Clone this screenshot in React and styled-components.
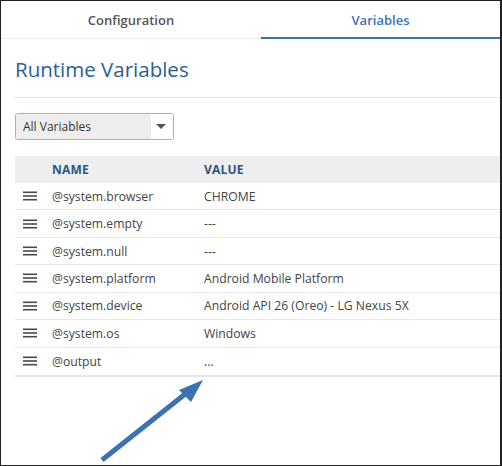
import React from "react";
import styled, { createGlobalStyle } from "styled-components";

const GlobalStyle = createGlobalStyle`
    html, body {
        margin: 0;
        padding: 0;
        background: #fff;
    }
    body {
        font-family: "Open Sans", "Noto Sans", sans-serif;
    }
`;

const variables = [
    { name: "@system.browser", value: "CHROME" },
    { name: "@system.empty", value: "---" },
    { name: "@system.null", value: "---" },
    { name: "@system.platform", value: "Android Mobile Platform" },
    { name: "@system.device", value: "Android API 26 (Oreo) - LG Nexus 5X" },
    { name: "@system.os", value: "Windows" },
    { name: "@output", value: "..." },
];

const Frame = styled.div`
    position: relative;
    width: 502px;
    height: 466px;
    box-sizing: border-box;
    border: 1px solid #222;
    border-right-width: 2px;
    overflow: hidden;
    background: #fff;
`;

const Tabs = styled.div`
    display: flex;
    height: 38px;
    box-sizing: border-box;
    border-bottom: 1px solid #ebebeb;
`;

const Tab = styled.div`
    flex: ${({ $grow }) => ($grow ? "1" : "0 0 260px")};
    display: flex;
    align-items: center;
    justify-content: center;
    font-size: 13px;
    font-weight: 600;
    color: ${({ $active }) => ($active ? "#3a72b2" : "#555")};
    border-bottom: 2px solid ${({ $active }) => ($active ? "#3a72b2" : "transparent")};
    margin-bottom: -1px;
    padding-top: 1px;
`;

const Content = styled.div`
    padding-left: 13px;
`;

const Title = styled.h1`
    margin: 0;
    padding-top: 16px;
    padding-bottom: 14px;
    padding-left: 1px;
    font-size: 20.5px;
    line-height: 28px;
    font-weight: 400;
    color: #2b5f8f;
    border-bottom: 1px solid #e6e6e6;
`;

const Select = styled.div`
    margin: 15px 0 0 1px;
    width: 159px;
    height: 27px;
    box-sizing: border-box;
    display: flex;
    border: 1px solid #a9b0b7;
    border-radius: 3px;
    overflow: hidden;
    font-size: 12px;
    color: #333;
`;

const SelectLabel = styled.div`
    flex: 1;
    display: flex;
    align-items: center;
    padding-left: 7px;
    background: #eeeeee;
`;

const SelectButton = styled.div`
    width: 22px;
    display: flex;
    align-items: center;
    justify-content: center;
    background: #fff;
`;

const Caret = styled.span`
    width: 0;
    height: 0;
    border-left: 5px solid transparent;
    border-right: 5px solid transparent;
    border-top: 5px solid #555;
    margin-right: 2px;
`;

const Table = styled.div`
    margin: 16px 0 0 1px;
    border-bottom: 2px solid #e6e6e6;
`;

const Row = styled.div`
    display: grid;
    grid-template-columns: 37px 152px 1fr;
    align-items: center;
    height: ${({ $head }) => ($head ? "27px" : "27.43px")};
    box-sizing: border-box;
    background: ${({ $head }) => ($head ? "#eeeeee" : "#fff")};
    border-bottom: ${({ $head, $last }) => ($head || $last ? "none" : "1px solid #e4e9ef")};
    font-size: 12.2px;
    color: #444;
`;

const HeadCell = styled.div`
    font-weight: 700;
    font-size: 12px;
    color: #2a5783;
    letter-spacing: 0.2px;
`;

const Cell = styled.div`
    white-space: nowrap;
`;

const Handle = styled.div`
    padding-left: 8px;
    display: flex;
`;

const Arrow = styled.svg`
    position: absolute;
    left: 0;
    top: 0;
    pointer-events: none;
`;

function MenuIcon() {
    return (
        <svg width="14" height="10" viewBox="0 0 14 10">
            <rect x="0" y="0.5" width="14" height="1.6" fill="#4a4a4a" />
            <rect x="0" y="4.2" width="14" height="1.6" fill="#4a4a4a" />
            <rect x="0" y="7.9" width="14" height="1.6" fill="#4a4a4a" />
        </svg>
    );
}

export default function App() {
    return (
        <>
            <GlobalStyle />
            <Frame>
                <Tabs>
                    <Tab>Configuration</Tab>
                    <Tab $grow $active>Variables</Tab>
                </Tabs>
                <Content>
                    <Title>Runtime Variables</Title>
                    <Select>
                        <SelectLabel>All Variables</SelectLabel>
                        <SelectButton>
                            <Caret />
                        </SelectButton>
                    </Select>
                    <Table>
                        <Row $head>
                            <span />
                            <HeadCell>NAME</HeadCell>
                            <HeadCell>VALUE</HeadCell>
                        </Row>
                        {variables.map((v, i) => (
                            <Row key={v.name} $last={i === variables.length - 1}>
                                <Handle>
                                    <MenuIcon />
                                </Handle>
                                <Cell>{v.name}</Cell>
                                <Cell>{v.value}</Cell>
                            </Row>
                        ))}
                    </Table>
                </Content>
                <Arrow width="502" height="466" viewBox="0 0 502 466">
                    <line x1="101" y1="459" x2="188" y2="390" stroke="#3b72b0" strokeWidth="5" />
                    <polygon points="202,379 178,389 190,401" fill="#3b72b0" />
                </Arrow>
            </Frame>
        </>
    );
}
